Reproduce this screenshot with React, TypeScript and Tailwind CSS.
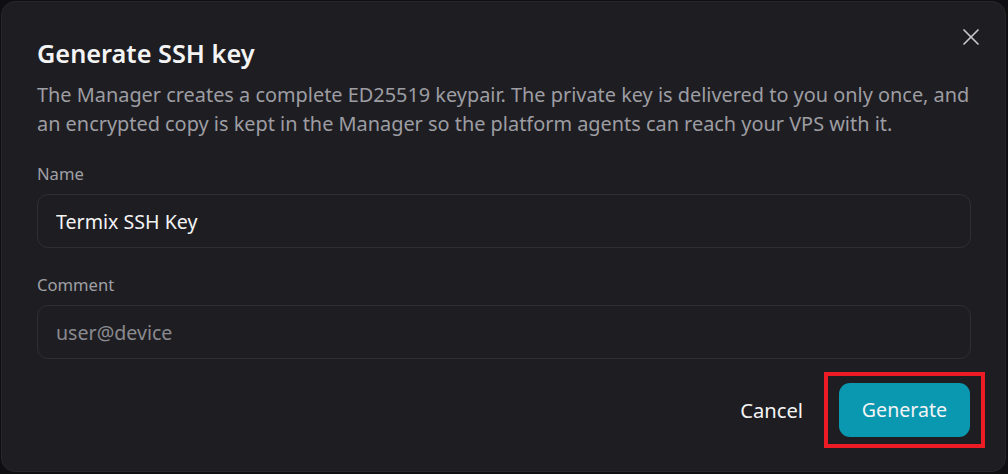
import React from "react";
import { X } from "lucide-react";

export default function App() {
  return (
    <div
      className="w-[1008px] h-[474px] bg-[#0f0f11] p-px"
      style={{ fontFamily: '"Noto Sans", "Open Sans", sans-serif' }}
    >
      <div className="relative w-[1005px] h-[471px] rounded-[14px] border border-[#27272b] bg-[#1e1e22] px-[35px] pt-[34px]">
        <button className="absolute right-[20px] top-[21px] text-[#c4c4c9]">
          <X size={28} strokeWidth={1.5} />
        </button>
        <h2 className="text-[25.3px] leading-[34px] font-semibold text-[#f4f4f5]">Generate SSH key</h2>
        <p className="mt-[10px] text-[19.9px] leading-[29px] text-[#9d9da3] whitespace-nowrap">
          The Manager creates a complete ED25519 keypair. The private key is delivered to you only once, and
          <br />
          an encrypted copy is kept in the Manager so the platform agents can reach your VPS with it.
        </p>

        <div className="mt-[25px] flex flex-col gap-[9px]">
          <label className="text-[16.6px] leading-[22px] text-[#a0a0a6]">Name</label>
          <input
            defaultValue="Termix SSH Key"
            className="h-[54px] w-[934px] rounded-[11px] border border-[#2e2e33] bg-transparent px-[18px] text-[19.6px] text-[#f4f4f5] outline-none"
          />
        </div>

        <div className="mt-[26px] flex flex-col gap-[9px]">
          <label className="text-[16.6px] leading-[22px] text-[#a0a0a6]">Comment</label>
          <input
            placeholder="user@device"
            className="h-[54px] w-[934px] rounded-[11px] border border-[#2e2e33] bg-transparent px-[18px] text-[19.6px] text-[#f4f4f5] placeholder:text-[#8a8a90] outline-none"
          />
        </div>

        <div className="mt-[13px] mr-[-15px] flex items-center justify-end gap-[20px]">
          <button className="text-[20.2px] text-[#f4f4f5] px-[1px]">Cancel</button>
          <div className="border-4 border-[#ed1c24] px-[11px] py-[7px]">
            <button className="h-[54px] w-[131px] rounded-[11px] bg-[#0a97b0] text-[19.6px] text-[#f4f4f5]">
              Generate
            </button>
          </div>
        </div>
      </div>
    </div>
  );
}
